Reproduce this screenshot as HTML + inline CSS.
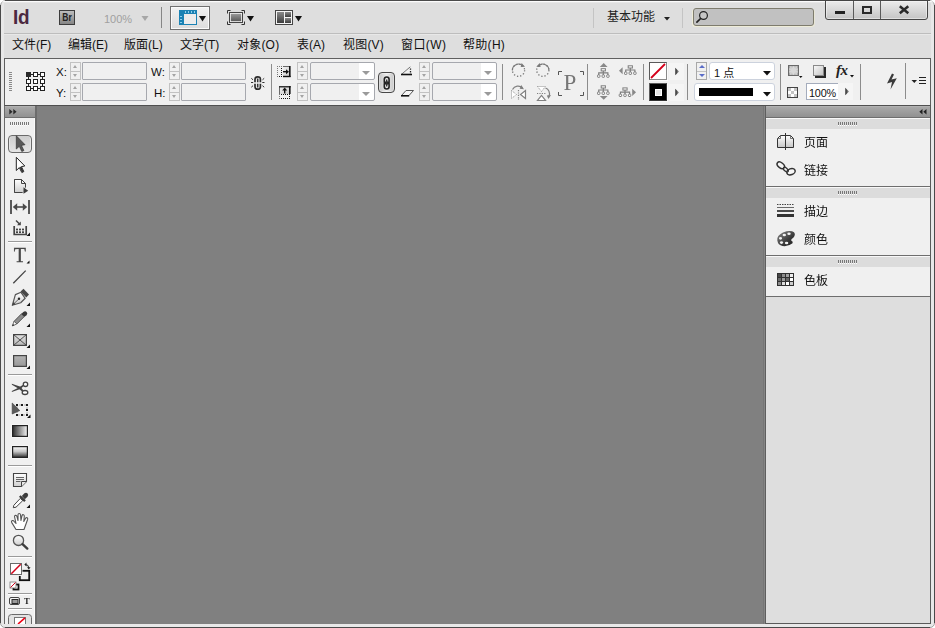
<!DOCTYPE html>
<html lang="zh-CN">
<head>
<meta charset="utf-8">
<title>Adobe InDesign</title>
<style>
html,body{margin:0;padding:0;background:#fff;overflow:hidden;}
body{width:935px;height:628px;position:relative;font-family:"Liberation Sans","Noto Sans CJK SC",sans-serif;font-size:12px;color:#1a1a1a;}
.a{position:absolute;box-sizing:border-box;}
svg{position:absolute;overflow:visible;}
#win{left:0;top:0;width:935px;height:628px;background:#e8e8e8;border:1px solid #a2a2a2;border-radius:6px 6px 5px 5px;overflow:hidden;}
.wb{background:#4a4a4a;}
#root{left:0;top:0;width:935px;height:628px;}
.vsep{width:1px;height:36px;top:64px;background:#8c8c8c;}
.tsep{width:1px;background:#c4c4c4;}
.menu span{position:absolute;top:37px;white-space:nowrap;font-size:12px;line-height:16px;color:#111;}
.fld{width:65px;height:18px;background:#f0f0f0;border:1px solid #a6a8ae;border-radius:1px;}
.cmb{width:65px;height:18px;background:#f0f0f0;border:1px solid #a6a8ae;border-radius:2px;}
.cmb:before{content:"";position:absolute;right:0;top:0;bottom:0;width:15px;background:#fff;border-radius:0 2px 2px 0;}
.cmb:after{content:"";position:absolute;right:4px;top:8px;width:0;height:0;border-left:4px solid transparent;border-right:4px solid transparent;border-top:4px solid #9a9a9a;}
.spin{width:11px;height:18px;border:1px solid #c2c2c2;background:#f0f0f0;}
.spin:before,.spin:after{content:"";position:absolute;left:2px;width:0;height:0;border-left:2.5px solid transparent;border-right:2.5px solid transparent;}
.spin:before{top:2px;border-bottom:3px solid #a4a4a4;}
.spin:after{bottom:2px;border-top:3px solid #a4a4a4;}
.spin i{position:absolute;left:0;right:0;top:8px;height:1px;background:#c2c2c2;}
.spin.blue{border-color:#a8a8a8;}
.spin.blue:before{border-bottom-color:#5a6cc8;left:1.500px;border-left-width:3px;border-right-width:3px;}
.spin.blue:after{border-top-color:#5a6cc8;left:1.500px;border-left-width:3px;border-right-width:3px;}
.lbl{font-size:11.5px;line-height:14px;color:#111;white-space:nowrap;}
.wht{background:#fff;border:1px solid #ccd2dd;border-radius:3px;}
.tri-d{width:0;height:0;border-left:4px solid transparent;border-right:4px solid transparent;border-top:4px solid #111;}
.tri-r{width:0;height:0;border-top:4px solid transparent;border-bottom:4px solid transparent;border-left:5px solid #333;}
.abtn{width:15px;height:17px;background:#f5f5f5;}
.ptxt{font-size:12px;line-height:14px;color:#111;white-space:nowrap;will-change:transform;}
.grpbar{left:766px;width:164px;height:11px;background:#dcdcdc;border-top:1px solid #f8f8f8;}
.grpbody{left:766px;width:164px;background:#f0f0f0;}
.grip{height:3px;width:20px;background:repeating-linear-gradient(90deg,#787878 0,#787878 1px,transparent 1px,transparent 2px);}
.grip:after{content:"";position:absolute;left:0;top:3px;width:20px;height:1px;background:repeating-linear-gradient(90deg,#fcfcfc 0,#fcfcfc 1px,transparent 1px,transparent 2px);}
.hline{height:1px;background:#6e6e6e;}
.tline{left:9px;width:22px;height:1px;background:#9a9a9a;box-shadow:0 1px 0 #fff;}
.corner{width:0;height:0;border-left:3px solid transparent;border-bottom:3px solid #111;}
</style>
</head>
<body>
<div id="win" class="a"></div>
<div class="a wb" style="left:5px;top:0;width:925px;height:1px;"></div>
<div class="a wb" style="left:5px;top:627px;width:925px;height:1px;"></div>
<div class="a wb" style="left:0;top:5px;width:1px;height:618px;"></div>
<div class="a wb" style="left:934px;top:5px;width:1px;height:618px;"></div>
<div id="root" class="a">
  <!-- application background -->
  <div class="a" style="left:4px;top:3px;width:927px;height:621px;background:#dedede;"></div>
  <div class="a" style="left:2px;top:1px;width:931px;height:2px;background:linear-gradient(#fbfbfb 50%,#e6e6e6 50%);border-radius:5px 5px 0 0;"></div>
  <!-- ===== APP BAR ===== -->
  <div id="appbar" class="a" style="left:0;top:0;width:935px;height:34px;">
    <div class="a" style="left:4px;top:33px;width:927px;height:1px;background:#bdbdbd;"></div>
    <div class="a" style="left:4px;top:34px;width:927px;height:1px;background:#e8e8e8;"></div>
    <div class="a" style="left:13px;top:5px;font-size:21px;line-height:24px;font-weight:bold;color:#4b2840;letter-spacing:-0.3px;transform:scaleX(.9);transform-origin:0 0;">Id</div>
    <div class="a" style="left:59px;top:10px;width:16px;height:15px;border:1px solid #3c3c3c;background:linear-gradient(#bdbdbd,#858585);"></div>
    <div class="a" style="left:59px;top:10px;width:16px;height:15px;font-size:10px;line-height:15px;font-weight:bold;color:#222;text-align:center;transform:scaleX(.85);">Br</div>
    <div class="a" style="left:104px;top:12px;font-size:11px;line-height:14px;color:#a0a0a0;">100%</div>
    <svg style="left:141px;top:16px" width="8" height="5"><polygon points="0.5,0 7.5,0 4,5" fill="#a6a6a6"/></svg>
    <div class="a" style="left:161px;top:7px;width:1px;height:21px;background:#868686;"></div>

    <!-- view options button -->
    <div class="a" style="left:170px;top:6px;width:40px;height:24px;border:1px solid #707070;background:linear-gradient(#f2f2f2,#dcdcdc);box-shadow:inset 0 0 0 1px #fafafa;"></div>
    <svg style="left:179px;top:10px" width="19" height="16" viewBox="0 0 19 16">
      <rect x="0" y="0" width="18" height="15" fill="#1b82b4"/>
      <rect x="5" y="4" width="12" height="10" fill="#ececec"/>
      <g fill="#8fd0ee"><rect x="6" y="1" width="1" height="2"/><rect x="9" y="1" width="1" height="2"/><rect x="12" y="1" width="1" height="2"/><rect x="15" y="1" width="1" height="2"/><rect x="1" y="6" width="2" height="1"/><rect x="1" y="9" width="2" height="1"/><rect x="1" y="12" width="2" height="1"/></g>
    </svg>
    <svg style="left:199px;top:16px" width="8" height="6"><polygon points="0,0 7,0 3.5,5.5" fill="#111"/></svg>

    <!-- screen mode -->
    <svg style="left:227px;top:10px" width="19" height="16" viewBox="0 0 19 16">
      <defs><linearGradient id="gsm" x1="0" y1="0" x2="0" y2="1"><stop offset="0" stop-color="#9a9a9a"/><stop offset="1" stop-color="#5a5a5a"/></linearGradient></defs>
      <path d="M0.5 3.5V0.5H3.5M14.5 0.5H17.5V3.5M17.5 11.500V14.5H14.5M3.5 14.5H0.5V11.5" fill="none" stroke="#333" stroke-width="1"/>
      <rect x="2.500" y="2.500" width="13" height="10" fill="#f4f4f4" stroke="#444"/>
      <rect x="3.800" y="3.800" width="10.400" height="7.400" fill="url(#gsm)"/>
    </svg>
    <svg style="left:247px;top:16px" width="8" height="6"><polygon points="0,0 7,0 3.5,5.5" fill="#111"/></svg>

    <!-- arrange documents -->
    <svg style="left:275px;top:10px" width="19" height="16" viewBox="0 0 19 16">
      <defs><linearGradient id="gad" x1="0" y1="0" x2="0" y2="1"><stop offset="0" stop-color="#8a8a8a"/><stop offset="1" stop-color="#3c3c3c"/></linearGradient></defs>
      <rect x="0.500" y="0.500" width="17" height="14" fill="#f4f4f4" stroke="#444"/>
      <rect x="2" y="2" width="7" height="11" fill="url(#gad)"/>
      <rect x="10" y="2" width="6" height="5" fill="url(#gad)"/>
      <rect x="10" y="8" width="6" height="5" fill="url(#gad)"/>
    </svg>
    <svg style="left:295px;top:16px" width="8" height="6"><polygon points="0,0 7,0 3.5,5.5" fill="#111"/></svg>

    <!-- workspace switcher -->
    <div class="a tsep" style="left:593px;top:8px;height:20px;"></div>
    <div class="a" style="left:607px;top:9px;font-size:12px;line-height:16px;color:#222;white-space:nowrap;">基本功能</div>
    <svg style="left:664px;top:17px" width="6" height="4"><polygon points="0,0 6,0 3,3.500" fill="#222"/></svg>
    <div class="a tsep" style="left:682px;top:8px;height:20px;"></div>

    <!-- search -->
    <div class="a" style="left:693px;top:8px;width:121px;height:18px;background:#c1c1c1;border:1px solid #7e7c6e;border-radius:3px;box-shadow:-1px 1px 0 #eeecd8,1px 1px 0 #e8e6d6;"></div>
    <svg style="left:696px;top:10px" width="14" height="14" viewBox="0 0 14 14">
      <circle cx="7.500" cy="5.500" r="3.900" fill="#c6c6c6" stroke="#222" stroke-width="1.200"/>
      <path d="M4.600 8.500L0.900 12.200" stroke="#222" stroke-width="1.700" stroke-linecap="round"/>
    </svg>

    <!-- window buttons -->
    <div class="a" style="left:825px;top:0px;width:103px;height:20px;border:1px solid #454545;border-radius:0 0 3px 3px;background:linear-gradient(#e8e8e8 10%,#c4c4c4 100%);box-shadow:inset 0 0 0 1px rgba(255,255,255,.45);"></div>
    <div class="a" style="left:853px;top:1px;width:1px;height:18px;background:#5a5a5a;"></div>
    <div class="a" style="left:880px;top:1px;width:1px;height:18px;background:#5a5a5a;"></div>
    <div class="a" style="left:835px;top:11px;width:10px;height:3px;background:#222;"></div>
    <div class="a" style="left:862px;top:6px;width:10px;height:8px;border:2px solid #2a2a2a;border-top-width:2px;"></div>
    <svg style="left:898px;top:5px" width="12" height="9" viewBox="0 0 12 9"><path d="M1.800 1.300L10.300 8.300M10.300 1.300L1.800 8.300" stroke="#2a2a2a" stroke-width="2.500"/></svg>
  </div>

  <!-- ===== MENU BAR ===== -->
  <div class="menu">
    <span style="left:12px;">文件(F)</span>
    <span style="left:68px;">编辑(E)</span>
    <span style="left:124px;">版面(L)</span>
    <span style="left:180px;">文字(T)</span>
    <span style="left:237px;letter-spacing:.2px;">对象(O)</span>
    <span style="left:297px;">表(A)</span>
    <span style="left:343px;letter-spacing:.2px;">视图(V)</span>
    <span style="left:401px;letter-spacing:.4px;">窗口(W)</span>
    <span style="left:463px;letter-spacing:.3px;">帮助(H)</span>
  </div>
  <!-- ===== CONTROL PANEL ===== -->
  <div id="ctrl" class="a" style="left:4px;top:58px;width:927px;height:48px;background:#f0f0f0;border:1px solid #5f5f5f;border-bottom-color:#505050;"></div>
  <!-- grip -->
  <div class="a" style="left:9px;top:72px;width:3px;height:20px;background:repeating-linear-gradient(180deg,#8a8a8a 0,#8a8a8a 1px,transparent 1px,transparent 2px);"></div>
  <!-- reference point -->
  <svg style="left:26px;top:72px" width="19" height="19" viewBox="0 0 19 19">
    <path d="M2.500 2.500H16.500V16.500H2.500Z" fill="none" stroke="#222" stroke-width="1"/>
    <g fill="#fff" stroke="#222" stroke-width="1">
      <rect x="7.500" y="0.500" width="4" height="4"/><rect x="14.500" y="0.500" width="4" height="4"/>
      <rect x="0.500" y="7.500" width="4" height="4"/><rect x="7.500" y="7.500" width="4" height="4"/><rect x="14.500" y="7.500" width="4" height="4"/>
      <rect x="0.500" y="14.500" width="4" height="4"/><rect x="7.500" y="14.500" width="4" height="4"/><rect x="14.500" y="14.500" width="4" height="4"/>
    </g>
    <rect x="0" y="0" width="5" height="5" fill="#2a2a2a"/>
  </svg>
  <!-- X Y -->
  <div class="a lbl" style="left:56px;top:65px;">X:</div>
  <div class="a lbl" style="left:56px;top:86px;">Y:</div>
  <div class="a spin" style="left:70px;top:62px;"><i></i></div>
  <div class="a spin" style="left:70px;top:83px;"><i></i></div>
  <div class="a fld" style="left:82px;top:62px;"></div>
  <div class="a fld" style="left:82px;top:83px;"></div>
  <!-- W H -->
  <div class="a lbl" style="left:151px;top:65px;">W:</div>
  <div class="a lbl" style="left:154px;top:86px;">H:</div>
  <div class="a spin" style="left:169px;top:62px;"><i></i></div>
  <div class="a spin" style="left:169px;top:83px;"><i></i></div>
  <div class="a fld" style="left:181px;top:62px;"></div>
  <div class="a fld" style="left:181px;top:83px;"></div>
  <!-- broken chain -->
  <svg style="left:250px;top:75px" width="16" height="16" viewBox="250 75 16 16">
    <g fill="none" stroke="#2c2c2c" stroke-width="1.700">
      <path d="M255 82.300V79.300Q255 76.800 257.700 76.800T260.400 79.300V82.300"/>
      <path d="M255 83.700V86.700Q255 89.200 257.700 89.200T260.400 86.700V83.700"/>
    </g>
    <path d="M257.700 78.500V82.300M257.700 83.700V87.500" stroke="#333" stroke-width="1.500"/>
    <path d="M251 82.500H253.200M262.300 82.500H264.500M251.300 78.300L253 79.800M264.200 78.300L262.500 79.800M251.300 87.200L253 85.700M264.200 87.200L262.500 85.700" stroke="#333" stroke-width="1"/>
  </svg>
  <div class="a vsep" style="left:271px;"></div>
  <!-- scale X% icon -->
  <svg style="left:276px;top:64px" width="16" height="38" viewBox="276 64 16 38">
    <defs><linearGradient id="gsc" x1="0" y1="0" x2="1" y2="1"><stop offset="0" stop-color="#f2f2f2"/><stop offset="1" stop-color="#c8c8c8"/></linearGradient></defs>
    <rect x="283" y="66" width="7" height="10.500" fill="url(#gsc)"/>
    <rect x="283" y="66" width="7" height="1" fill="#6a6a6a"/>
    <rect x="289" y="66" width="1.600" height="11" fill="#111"/>
    <rect x="283" y="75.800" width="7.600" height="1.400" fill="#111"/>
    <rect x="283" y="71" width="4" height="1.400" fill="#111"/><path d="M286 69.200L289 71.700L286 74.200Z" fill="#111"/>
    <g fill="#7a7a7a"><rect x="277" y="66" width="1" height="1"/><rect x="279" y="66" width="1" height="1"/><rect x="281" y="66" width="1" height="1"/><rect x="277" y="68" width="1" height="1"/><rect x="277" y="70" width="1" height="1"/><rect x="277" y="72" width="1" height="1"/><rect x="277" y="74" width="1" height="1"/><rect x="277" y="76" width="1" height="1"/></g>
    <g fill="#111"><rect x="281" y="68" width="1" height="1"/><rect x="281" y="70" width="1" height="1"/><rect x="281" y="72" width="1" height="1"/><rect x="281" y="74" width="1" height="1"/><rect x="279" y="76" width="1" height="1"/><rect x="281" y="76" width="1" height="1"/></g>
    <!-- scale Y% icon -->
    <rect x="279" y="86" width="11" height="8" fill="url(#gsc)"/>
    <rect x="279" y="86" width="1" height="8" fill="#6a6a6a"/>
    <rect x="279" y="86" width="11.600" height="1.500" fill="#333"/>
    <rect x="289" y="86" width="1.600" height="8" fill="#111"/>
    <rect x="284" y="89" width="1.400" height="4.500" fill="#111"/><path d="M282.200 90.500L284.700 87.600L287.200 90.500Z" fill="#111"/>
    <g fill="#7a7a7a"><rect x="279" y="94" width="1" height="1"/><rect x="279" y="96" width="1" height="1"/><rect x="279" y="98" width="1" height="1"/></g>
    <g fill="#111"><rect x="281" y="94" width="1" height="1"/><rect x="283" y="94" width="1" height="1"/><rect x="285" y="94" width="1" height="1"/><rect x="287" y="94" width="1" height="1"/><rect x="289" y="94" width="1" height="1"/><rect x="289" y="96" width="1" height="1"/><rect x="281" y="98" width="1" height="1"/><rect x="283" y="98" width="1" height="1"/><rect x="285" y="98" width="1" height="1"/><rect x="287" y="98" width="1" height="1"/><rect x="289" y="98" width="1" height="1"/></g>
  </svg>
  <div class="a spin" style="left:297px;top:62px;"><i></i></div>
  <div class="a spin" style="left:297px;top:83px;"><i></i></div>
  <div class="a cmb" style="left:310px;top:62px;"></div>
  <div class="a cmb" style="left:310px;top:83px;"></div>
  <!-- constrain link button -->
  <div class="a" style="left:378px;top:72px;width:17px;height:21px;border:1px solid #484848;border-radius:4px;background:linear-gradient(90deg,#c4c4c4,#ececec 50%,#c8c8c8);box-shadow:inset 0 0 0 1px rgba(255,255,255,.35);"></div>
  <svg style="left:382px;top:75px" width="9" height="16" viewBox="382 75 9 16">
    <rect x="384.300" y="77" width="4.800" height="7" rx="2.400" fill="#e8e8e8" stroke="#222" stroke-width="1.600"/>
    <rect x="384.300" y="82" width="4.800" height="7" rx="2.400" fill="none" stroke="#222" stroke-width="1.600"/>
    <path d="M386.700 79.500V86.500" stroke="#333" stroke-width="1.400"/>
  </svg>
  <!-- rotation / shear icons -->
  <svg style="left:400px;top:66px" width="14" height="11" viewBox="0 0 14 11">
    <path d="M1.500 8.300L10.300 0.800" stroke="#777" stroke-width="1"/>
    <path d="M10.500 2.500V8" stroke="#222" stroke-width="1.300" stroke-dasharray="1.300 1.300"/>
    <path d="M1 8.500H12" stroke="#111" stroke-width="1.600"/>
  </svg>
  <svg style="left:400px;top:89px" width="15" height="9" viewBox="0 0 15 9">
    <path d="M1.500 6.500L6 1.500H13.500L9 6.500Z" fill="#f6f6f6" stroke="#555" stroke-width="1"/>
    <path d="M1 6.800H9.200" stroke="#111" stroke-width="1.600"/>
  </svg>
  <div class="a spin" style="left:419px;top:62px;"><i></i></div>
  <div class="a spin" style="left:419px;top:83px;"><i></i></div>
  <div class="a cmb" style="left:432px;top:62px;"></div>
  <div class="a cmb" style="left:432px;top:83px;"></div>
  <div class="a vsep" style="left:502px;"></div>
  <!-- rotate cw / ccw -->
  <svg style="left:508px;top:60px" width="48" height="20" viewBox="508 60 48 20">
    <circle cx="518.500" cy="70.200" r="6.100" fill="none" stroke="#787878" stroke-width="1.300" stroke-dasharray="1.300 1.900"/>
    <path d="M512.400 70.500A6.100 6.100 0 0 1 522.600 65.700" fill="none" stroke="#787878" stroke-width="1.100"/>
    <path d="M521.600 63L525 66.800L520.700 67Z" fill="#787878"/>
    <circle cx="542.800" cy="70.200" r="6.100" fill="none" stroke="#787878" stroke-width="1.300" stroke-dasharray="1.300 1.900"/>
    <path d="M548.900 70.500A6.100 6.100 0 0 0 538.700 65.700" fill="none" stroke="#787878" stroke-width="1.100"/>
    <path d="M539.700 63L536.300 66.800L540.600 67Z" fill="#787878"/>
  </svg>
  <!-- flip h / v -->
  <svg style="left:510px;top:84px" width="18" height="18" viewBox="0 0 18 18">
    <path d="M2.500 5.500A6.200 6.200 0 0 1 12.500 4" fill="none" stroke="#808080" stroke-width="1.200"/>
    <path d="M11.300 1L14 5.200L9.600 4.800Z" fill="#808080"/>
    <path d="M1.500 6.500V14.500L6.500 10.500Z" fill="#fff" stroke="#909090" stroke-width="1" stroke-dasharray="1 1"/>
    <path d="M8.500 6V16" stroke="#808080" stroke-width="1.200" stroke-dasharray="1.200 1.200"/>
    <path d="M15.500 6.500V14.500L10.500 10.500Z" fill="#fff" stroke="#808080" stroke-width="1.200"/>
  </svg>
  <svg style="left:534px;top:85px" width="18" height="18" viewBox="0 0 18 18">
    <path d="M3.500 1.500H11.500L7.500 6.500Z" fill="#fff" stroke="#909090" stroke-width="1" stroke-dasharray="1 1"/>
    <path d="M3 8.500H12" stroke="#808080" stroke-width="1.200" stroke-dasharray="1.200 1.200"/>
    <path d="M3.500 15.500H11.500L7.500 10.500Z" fill="#fff" stroke="#808080" stroke-width="1.200"/>
    <path d="M11.500 3A6 6 0 0 1 15 11" fill="none" stroke="#808080" stroke-width="1.200"/>
    <path d="M12.800 10.500L17 10L14.500 14Z" fill="#808080"/>
  </svg>
  <!-- P preview -->
  <svg style="left:558px;top:71px;will-change:transform" width="26" height="25" viewBox="0 0 26 25">
    <path d="M0.500 4V0.500H4M22 0.500H25.500V4M25.500 21V24.500H22M4 24.500H0.500V21" fill="none" stroke="#555" stroke-width="1"/>
    <text x="5.500" y="19" font-family="Liberation Serif, serif" font-size="23" fill="#777">P</text>
  </svg>
  <div class="a vsep" style="left:587px;"></div>
  <svg style="left:0;top:0" width="0" height="0"><defs><linearGradient id="garr" x1="0" y1="0" x2="1" y2="0"><stop offset="0" stop-color="#222"/><stop offset="1" stop-color="#a0a0a0"/></linearGradient></defs></svg>
  <!-- select container / content icons -->
  <svg style="left:590px;top:58px" width="50" height="48" viewBox="590 58 50 48">
    <path d="M599.8 66.9H607.6L603.7 63Z" fill="#888"/><g fill="none" stroke="#7c7c7c" stroke-width="1.1"><path d="M603.3 70.8V72.9M598.7 75.2V72.9H607.9V75.2M603.3 72.9V75.2"/></g><g fill="#fff" stroke="#7c7c7c" stroke-width="1"><rect x="601.2" y="68.7" width="4.2" height="2.2"/><rect x="597.5" y="74.9" width="2.4" height="2.4" rx="0.6"/><rect x="602.1" y="74.9" width="2.4" height="2.4" rx="0.6"/><rect x="606.7" y="74.9" width="2.4" height="2.4" rx="0.6"/></g>
    <path d="M622.6 67.2V74.2L619 70.700Z" fill="#888"/><g fill="none" stroke="#7c7c7c" stroke-width="1.1"><path d="M630.3 67.9V70M625.7 72.3V70H634.9V72.3M630.3 70V72.3"/></g><g fill="#fff" stroke="#7c7c7c" stroke-width="1"><rect x="628.2" y="65.8" width="4.2" height="2.2"/><rect x="624.5" y="72" width="2.4" height="2.4" rx="0.6"/><rect x="629.1" y="72" width="2.4" height="2.4" rx="0.6"/><rect x="633.7" y="72" width="2.4" height="2.4" rx="0.6"/></g>
    <path d="M599.8 95.900H607.6L603.7 99.800Z" fill="#888"/><g fill="none" stroke="#7c7c7c" stroke-width="1.1"><path d="M603.3 87.9V90M598.7 92.3V90H607.9V92.3M603.3 90V92.3"/></g><g fill="#fff" stroke="#7c7c7c" stroke-width="1"><rect x="601.2" y="85.8" width="4.2" height="2.2"/><rect x="597.5" y="92" width="2.4" height="2.4" rx="0.6"/><rect x="602.1" y="92" width="2.4" height="2.4" rx="0.6"/><rect x="606.7" y="92" width="2.4" height="2.4" rx="0.6"/></g>
    <path d="M632.2 88.700V95.900L636 92.300Z" fill="#888"/><g fill="none" stroke="#7c7c7c" stroke-width="1.1"><path d="M625 90V92.1M620.4 94.4V92.1H629.6V94.4M625 92.1V94.4"/></g><g fill="#fff" stroke="#7c7c7c" stroke-width="1"><rect x="622.9" y="87.9" width="4.2" height="2.2"/><rect x="619.2" y="94.1" width="2.4" height="2.4" rx="0.6"/><rect x="623.8" y="94.1" width="2.4" height="2.4" rx="0.6"/><rect x="628.4" y="94.1" width="2.4" height="2.4" rx="0.6"/></g>
  </svg>
  <div class="a vsep" style="left:643px;"></div>
  <!-- fill swatch -->
  <div class="a" style="left:649px;top:62px;width:18px;height:18px;background:#fff;border:1px solid #5a5a5a;border-right-color:#8a8a8a;border-bottom-color:#8a8a8a;box-shadow:1px 1px 0 #fafafa;"></div>
  <svg style="left:650px;top:63px" width="16" height="16" viewBox="0 0 16 16"><path d="M1 15L15 1" stroke="#d4001a" stroke-width="1.800"/></svg>
  <div class="a abtn" style="left:669px;top:63px;"></div>
  <svg style="left:675px;top:67px" width="5" height="9"><polygon points="0.300,0.800 4,4.500 0.300,8.200" fill="url(#garr)"/></svg>
  <!-- stroke swatch -->
  <div class="a" style="left:649px;top:83px;width:18px;height:18px;background:#000;border:1px solid #5a5a5a;border-right-color:#333;border-bottom-color:#333;box-shadow:1px 1px 0 #fafafa;"></div>
  <div class="a" style="left:655px;top:89px;width:7px;height:7px;background:#e6e6e6;border:1px solid #fff;"></div>
  <div class="a abtn" style="left:669px;top:84px;"></div>
  <svg style="left:675px;top:88px" width="5" height="9"><polygon points="0.300,0.800 4,4.500 0.300,8.200" fill="url(#garr)"/></svg>
  <div class="a vsep" style="left:687px;"></div>
  <!-- stroke weight -->
  <div class="a spin blue" style="left:696px;top:62px;"><i></i></div>
  <div class="a wht" style="left:709px;top:62px;width:66px;height:18px;"></div>
  <div class="a lbl" style="left:714px;top:66px;font-size:11px;">1 点</div>
  <svg style="left:763px;top:71px" width="8" height="5"><polygon points="0,0 8,0 4,4.500" fill="#111"/></svg>
  <!-- stroke type -->
  <div class="a wht" style="left:694px;top:83px;width:81px;height:18px;"></div>
  <div class="a" style="left:699px;top:88px;width:54px;height:8px;background:#000;"></div>
  <svg style="left:763px;top:92px" width="8" height="5"><polygon points="0,0 8,0 4,4.500" fill="#111"/></svg>
  <div class="a vsep" style="left:780px;"></div>
  <!-- effects icons -->
  <svg style="left:787px;top:64px" width="17" height="15" viewBox="0 0 17 15">
    <defs><radialGradient id="gfe"><stop offset="0.500" stop-color="#d8d8d8"/><stop offset="1" stop-color="#a8a8a8"/></radialGradient></defs>
    <rect x="1.500" y="1.500" width="10" height="10" fill="url(#gfe)" stroke="#6a6a6a" stroke-width="1"/>
    <rect x="3" y="3" width="7" height="7" fill="none" stroke="#e8e8e8" stroke-width="1" stroke-dasharray="1.500 1.300"/>
    <path d="M12 12H15.500L13.700 14Z" fill="#111"/>
  </svg>
  <svg style="left:812px;top:64px" width="16" height="15" viewBox="0 0 16 15">
    <defs><linearGradient id="gds" x1="0" y1="0" x2="1" y2="1"><stop offset="0" stop-color="#fafafa"/><stop offset="1" stop-color="#c4c4c4"/></linearGradient></defs>
    <rect x="3" y="3" width="11" height="11" fill="#2a2a2a"/>
    <rect x="1.500" y="1.500" width="10" height="10" fill="url(#gds)" stroke="#8a8a8a" stroke-width="1"/>
  </svg>
  <div class="a" style="left:836px;top:61px;font-family:'Liberation Serif',serif;font-style:italic;font-weight:bold;font-size:15px;line-height:18px;color:#222;letter-spacing:-0.5px;">fx</div>
  <svg style="left:850px;top:75px" width="4" height="3"><polygon points="0,0 4,0 2,2.500" fill="#111"/></svg>
  <!-- opacity -->
  <svg style="left:787px;top:87px" width="12" height="12" viewBox="0 0 12 12">
    <rect x="0.500" y="0.500" width="10" height="10" fill="#fff" stroke="#444" stroke-width="1"/>
    <g fill="#c4c4c4"><rect x="1" y="1" width="3" height="3"/><rect x="7" y="1" width="3" height="3"/><rect x="4" y="4" width="3" height="3"/><rect x="1" y="7" width="3" height="3"/><rect x="7" y="7" width="3" height="3"/></g>
  </svg>
  <div class="a" style="left:806px;top:83px;width:33px;height:17px;background:#fff;border:1px solid #a4acbc;border-right:none;"></div>
  <div class="a lbl" style="left:809px;top:86px;font-size:11.5px;letter-spacing:-0.200px;transform:scaleX(.94);transform-origin:0 0;">100%</div>
  <div class="a abtn" style="left:838px;top:83px;"></div>
  <svg style="left:845px;top:87px" width="5" height="9"><polygon points="0.300,0.800 4,4.500 0.300,8.200" fill="url(#garr)"/></svg>
  <div class="a vsep" style="left:860px;"></div>
  <!-- quick apply -->
  <svg style="left:886px;top:73px" width="12" height="17" viewBox="0 0 12 17"><path d="M6 0.500L8 1.500L5.500 6.500L10.800 5.200L4.500 16.500L6 9L1 10.500Z" fill="#3a3a3a"/></svg>
  <div class="a vsep" style="left:905px;top:63px;"></div>
  <!-- panel menu -->
  <svg style="left:911px;top:76px" width="16" height="9" viewBox="0 0 16 9">
    <path d="M0.500 4H6L3.300 7Z" fill="#222"/>
    <path d="M8 1.500H15M8 4.500H15M8 7.500H15" stroke="#222" stroke-width="1"/>
  </svg>
  <!-- ===== CANVAS ===== -->
  <div class="a" style="left:35px;top:106px;width:731px;height:518px;background:#808080;border-left:2px solid #6c6c6c;"></div>
  <div class="a" style="left:763px;top:106px;width:1px;height:518px;background:#767676;"></div>
  <div class="a" style="left:764px;top:106px;width:1px;height:518px;background:#868686;"></div>
  <div class="a" style="left:765px;top:106px;width:1px;height:518px;background:#5e5e5e;"></div>
  <!-- ===== TOOLBOX ===== -->
  <div id="tools" class="a" style="left:4px;top:106px;width:31px;height:518px;background:#f0f0f0;border-left:1px solid #6a6a6a;border-right:1px solid #fafafa;"></div>
  <div class="a" style="left:5px;top:106px;width:30px;height:11px;background:linear-gradient(#a8a8a8,#919191);border-top:1px solid #b2b2b2;"></div>
  <div class="a" style="left:5px;top:117px;width:30px;height:1px;background:#6e6e6e;"></div>
  <svg style="left:9px;top:109px" width="8" height="6"><path d="M0.300 0V5.500L3.600 2.750ZM4.300 0V5.500L7.600 2.750Z" fill="#2a2a2a"/></svg>
  <div class="a grip" style="left:10px;top:122px;"></div>
  <!-- selected tool button -->
  <div class="a" style="left:8px;top:135px;width:24px;height:18px;border:1px solid #6a6a6a;border-radius:4px;background:linear-gradient(#cdcdcd,#e4e4e4);box-shadow:inset 1px 0 0 #e6e6e6,inset -1px 0 0 #e6e6e6;"></div>
  <div class="a tline" style="left:8px;top:241px;width:24px;"></div>
  <div class="a tline" style="left:8px;top:374px;width:24px;"></div>
  <div class="a tline" style="left:8px;top:465px;width:24px;"></div>
  <div class="a tline" style="left:8px;top:556px;width:24px;"></div>
  <div class="a tline" style="left:8px;top:593px;width:24px;"></div>
  <div class="a tline" style="left:8px;top:608px;width:24px;"></div>
  <svg style="left:0;top:0;overflow:hidden;will-change:transform" width="40" height="624" viewBox="0 0 40 624">
    <defs>
      <linearGradient id="tg1" x1="0" y1="0" x2="0" y2="1"><stop offset="0" stop-color="#e2e2e2"/><stop offset="1" stop-color="#b8b8b8"/></linearGradient>
      <linearGradient id="tg2" x1="0" y1="0" x2="0" y2="1"><stop offset="0" stop-color="#b4b4b4"/><stop offset="1" stop-color="#989898"/></linearGradient>
      <linearGradient id="tg3" x1="0" y1="0" x2="1" y2="0"><stop offset="0" stop-color="#2e2e2e"/><stop offset="1" stop-color="#f6f6f6"/></linearGradient>
      <linearGradient id="tg4" x1="0" y1="0" x2="0" y2="1"><stop offset="0" stop-color="#fafafa"/><stop offset="0.450" stop-color="#c8c8c8"/><stop offset="1" stop-color="#303030"/></linearGradient>
      <linearGradient id="tg5" x1="0" y1="0" x2="0" y2="1"><stop offset="0" stop-color="#fff"/><stop offset="1" stop-color="#cfcfcf"/></linearGradient>
    </defs>
    <!-- selection tool -->
    <path d="M16.300 135.800V149L19.300 146.300L21.800 151.500L23.900 150.500L21.400 145.400L25 144.700Z" fill="#585858" stroke="#333" stroke-width="0.700" stroke-linejoin="round"/>
    <!-- direct selection -->
    <path d="M16.300 157.300V170.500L19.300 167.600L21.800 172.500L23.800 171.600L21.400 166.600L24.800 166Z" fill="#fff" stroke="#222" stroke-width="1" stroke-linejoin="round"/>
    <path d="M19.600 167.500L22 172.300L23.600 171.500L21.200 166.600Z" fill="#333"/>
    <!-- page tool -->
    <path d="M14.500 179.500H21.500L25.500 183.500V187.500M14.500 179.500V192.500H22.500" fill="#f8f8f8" stroke="#444" stroke-width="1"/>
    <path d="M14.500 179.500H21.500L25.500 183.500V192.500H14.500Z" fill="url(#tg5)" stroke="none"/>
    <path d="M14.500 192.500V179.500H21.500L25.500 183.500V187.500M14.500 192.500H22.500M21.500 179.500V183.500H25.500" fill="none" stroke="#444" stroke-width="1"/>
    <path d="M23.500 187.300L28.200 190.700L23.500 193.800Z" fill="#3c3c3c"/>
    <!-- gap tool -->
    <path d="M11 200V214M29 200V214" stroke="#4a4a4a" stroke-width="1.800"/>
    <path d="M15 207H25" stroke="#4a4a4a" stroke-width="1.600"/>
    <path d="M12.800 207L17.200 203.200V210.800ZM27.200 207L22.800 203.200V210.800Z" fill="#4a4a4a"/>
    <!-- content collector -->
    <path d="M14.200 226V234.500H26.200V226" fill="none" stroke="#444" stroke-width="1.700"/>
    <path d="M16 220.500L19.500 224" stroke="#444" stroke-width="1.400"/>
    <path d="M20.800 221.500V225.300H17Z" fill="#444"/>
    <g fill="#444"><rect x="16" y="228.600" width="2" height="1.800"/><rect x="19" y="228.600" width="2" height="1.800"/><rect x="22" y="228.600" width="2" height="1.800"/><rect x="16" y="231.300" width="2" height="1.800"/><rect x="19" y="231.300" width="2" height="1.800"/><rect x="22" y="231.300" width="2" height="1.800"/></g>
    <path d="M30 232.500V236H26.500Z" fill="#111"/>
    <!-- type tool -->
    <text x="13.800" y="262.200" font-family="Liberation Serif, serif" font-size="20" fill="#484848" stroke="#484848" stroke-width="0.300">T</text>
    <path d="M29.500 260.500V263.500H26.500Z" fill="#111"/>
    <!-- line tool -->
    <path d="M13.300 283.200L25.700 270.600" stroke="#444" stroke-width="1.300"/>
    <!-- pen tool -->
    <path d="M12.300 305.300L15.400 294.600L21 292.300L25.200 298.300L20.700 302.700Z" fill="url(#tg5)" stroke="#555" stroke-width="1.200" stroke-linejoin="round"/>
    <path d="M12.500 305L18.800 299" stroke="#555" stroke-width="0.900"/>
    <path d="M12.300 305.300L13.300 302L15.600 304.300Z" fill="#444"/>
    <circle cx="19" cy="298.800" r="1.200" fill="#2a2a2a"/>
    <path d="M20.600 291.400L23.500 288.700L29 294.500L26.300 297.400Z" fill="#484848"/>
    <path d="M30 302.500V306H26.500Z" fill="#111"/>
    <!-- pencil tool -->
    <path d="M14.100 321.300L21.500 313.800L24.300 316.500L16.800 324Z" fill="#8e8e8e" stroke="#4a4a4a" stroke-width="0.900" stroke-linejoin="round"/>
    <path d="M12.300 325.900L14.100 321.300L16.800 324Z" fill="#fff" stroke="#4a4a4a" stroke-width="0.800" stroke-linejoin="round"/>
    <path d="M12.200 326L13 323.900L14.300 325.200Z" fill="#222"/>
    <path d="M21.300 314L23.300 312Q25.200 310.600 26.600 311.900Q28 313.400 26.600 315.200L24.500 316.800Z" fill="#383838"/>
    <path d="M30 323.500V327H26.500Z" fill="#111"/>
    <!-- rectangle frame tool -->
    <rect x="13.600" y="334.600" width="12.800" height="10.800" fill="url(#tg1)" stroke="#444" stroke-width="1.200"/>
    <path d="M13.600 334.600L26.400 345.400M26.400 334.600L13.600 345.400" stroke="#444" stroke-width="0.900"/>
    <path d="M30 344.500V348H26.500Z" fill="#111"/>
    <!-- rectangle tool -->
    <rect x="13.600" y="355.600" width="12.800" height="10.800" fill="url(#tg2)" stroke="#444" stroke-width="1.200"/>
    <path d="M30 365.500V369H26.500Z" fill="#111"/>
    <!-- scissors -->
    <path d="M11.800 383.700L20.600 386.800L23.400 390.600L22.300 391.800L19.200 389L11.900 384.700Z" fill="#444"/>
    <path d="M11.800 391.900L20.400 389L24 385.800L23 384.700L19.300 387.200L11.900 391Z" fill="#444"/>
    <circle cx="25.500" cy="384.300" r="2.200" fill="#fff" stroke="#444" stroke-width="1.300"/>
    <ellipse cx="25" cy="392.500" rx="2.800" ry="2" fill="#fff" stroke="#444" stroke-width="1.300"/>
    <!-- free transform -->
    <rect x="17" y="405" width="10" height="10" fill="none" stroke="#666" stroke-width="1" stroke-dasharray="1 1.500"/>
    <g fill="#1c1c1c"><rect x="16" y="404" width="2" height="2"/><rect x="21" y="404" width="2" height="2"/><rect x="26" y="404" width="2" height="2"/><rect x="26" y="409" width="2" height="2"/><rect x="16" y="414" width="2" height="2"/><rect x="21" y="414" width="2" height="2"/><rect x="26" y="414" width="2" height="2"/></g>
    <path d="M12.200 403V414L19.800 410.600Z" fill="#5a5a5a" stroke="#3a3a3a" stroke-width="0.600"/>
    <path d="M30.500 414.500V418H27Z" fill="#111"/>
    <!-- gradient swatch -->
    <rect x="11.500" y="424.500" width="17" height="13" fill="#fcfcfc"/>
    <rect x="12.600" y="425.600" width="14.800" height="10.800" fill="url(#tg3)" stroke="#222" stroke-width="1.200"/>
    <!-- gradient feather -->
    <rect x="11.500" y="445.500" width="17" height="13" fill="#fcfcfc"/>
    <rect x="12.600" y="446.600" width="14.800" height="10.800" fill="url(#tg4)" stroke="#222" stroke-width="1.200"/>
    <!-- note tool -->
    <path d="M13.500 473.500H26.500V481.500L21.500 486.500H13.500Z" fill="url(#tg5)" stroke="#444" stroke-width="1.100"/>
    <path d="M26.500 481.500H21.500V486.500" fill="#e8e8e8" stroke="#444" stroke-width="1"/>
    <path d="M16 477.500H24M16 479.500H24M16 481.500H20.500" stroke="#555" stroke-width="0.900"/>
    <!-- eyedropper -->
    <path d="M13.300 507.700L13.800 505.300L20.300 498.400L22.700 500.700L16 507.200Z" fill="#fff" stroke="#444" stroke-width="1" stroke-linejoin="round"/>
    <path d="M19 496.800L20.600 495.200L25.800 500.300L24.200 502Z" fill="#3c3c3c"/>
    <path d="M21.800 496L24.400 493.300Q26.300 492.200 27.600 493.600Q28.800 495.200 27.500 496.800L24.800 499.200Z" fill="#3c3c3c"/>
    <path d="M30 504.500V508H26.500Z" fill="#111"/>
    <!-- hand -->
    <path d="M16 529.500L11.800 522.600Q11 521 12.300 520.600Q13.500 520.400 14.300 521.600L16 523.500L14.600 517Q14.400 515.400 15.600 515.300Q16.700 515.300 17 516.700L18 520.500L18 514.800Q18.100 513.500 19.200 513.500Q20.400 513.500 20.500 514.800L21 520.400L22 515.600Q22.300 514.500 23.400 514.700Q24.400 515 24.300 516.200L23.800 521.500L25.600 518.300Q26.200 517.300 27.200 517.800Q28 518.300 27.600 519.500L24 529.500Z" fill="#fff" stroke="#555" stroke-width="1.100" stroke-linejoin="round"/>
    <!-- zoom -->
    <circle cx="18.500" cy="540.400" r="5.100" fill="url(#tg5)" stroke="#555" stroke-width="1.300"/>
    <path d="M22.500 544.200L27.300 548.600" stroke="#3c3c3c" stroke-width="2.400" stroke-linecap="round"/>
    <!-- fill / stroke -->
    <rect x="19.800" y="570.800" width="9.400" height="9.400" fill="#ececec" stroke="#111" stroke-width="1.800"/>
    <rect x="18" y="569.500" width="4.500" height="6.500" fill="#f0f0f0"/>
    <rect x="10.500" y="563.500" width="11" height="11" fill="#fff" stroke="#6a6a6a" stroke-width="1"/>
    <path d="M11.300 573.700L20.700 564.300" stroke="#d4001a" stroke-width="1.500"/>
    <path d="M25.200 564.500Q28.800 564.500 28.800 568" fill="none" stroke="#222" stroke-width="1"/>
    <path d="M26.500 562.500L24.300 564.500L26.500 566.500ZM27 567.200L28.800 569.600L30.600 567.200Z" fill="#222"/>
    <rect x="13.500" y="584.500" width="5" height="5" fill="#fff" stroke="#111" stroke-width="1.800"/>
    <rect x="10" y="582" width="6" height="6" fill="#fff" stroke="#777" stroke-width="0.800"/>
    <path d="M10.500 587.500L15.500 582.500" stroke="#d4001a" stroke-width="1"/>
    <!-- apply container / text -->
    <rect x="9.500" y="597.500" width="10" height="7" rx="1.500" fill="#f4f4f4" stroke="#444" stroke-width="1"/>
    <rect x="12" y="599.500" width="6" height="4" fill="#9a9a9a" stroke="#2a2a2a" stroke-width="1"/>
    <text x="24" y="603.700" font-family="Liberation Serif, serif" font-size="8.500" font-weight="bold" fill="#222">T</text>
    <!-- view mode button -->
    <path d="M8.500 624V617.500Q8.500 614.500 11.500 614.500H28.500Q31.500 614.500 31.500 617.500V624" fill="#e2e2e2" stroke="#6a6a6a" stroke-width="1"/>
    <rect x="14.500" y="617.500" width="11" height="8" fill="#fff" stroke="#777" stroke-width="1"/>
    <path d="M18 624L25 617.800" stroke="#f00014" stroke-width="1.600"/>
  </svg>
  <!-- ===== RIGHT DOCK ===== -->
  <div id="dock" class="a" style="left:766px;top:106px;width:165px;height:518px;background:#dedede;border-right:1px solid #5a5a5a;border-bottom:1px solid #5a5a5a;"></div>
  <div class="a" style="left:766px;top:106px;width:164px;height:11px;background:linear-gradient(#a8a8a8,#919191);border-top:1px solid #b2b2b2;"></div>
  <div class="a hline" style="left:766px;top:117px;width:164px;"></div>
  <svg style="left:919px;top:109px" width="8" height="6"><path d="M3.500 0V5.500L0.300 2.750ZM7.500 0V5.500L4.300 2.750Z" fill="#222"/></svg>
  <!-- group 1 -->
  <div class="a grpbar" style="top:118px;"></div>
  <div class="a grip" style="left:838px;top:122px;"></div>
  <div class="a grpbody" style="top:129px;height:57px;"></div>
  <div class="a hline" style="left:766px;top:186px;width:164px;"></div>
  <div class="a ptxt" style="left:804px;top:136px;">页面</div>
  <div class="a ptxt" style="left:804px;top:164px;">链接</div>
  <!-- group 2 -->
  <div class="a grpbar" style="top:187px;"></div>
  <div class="a grip" style="left:838px;top:191px;"></div>
  <div class="a grpbody" style="top:198px;height:57px;"></div>
  <div class="a hline" style="left:766px;top:255px;width:164px;"></div>
  <div class="a ptxt" style="left:804px;top:205px;">描边</div>
  <div class="a ptxt" style="left:804px;top:233px;">颜色</div>
  <!-- group 3 -->
  <div class="a grpbar" style="top:256px;"></div>
  <div class="a grip" style="left:838px;top:260px;"></div>
  <div class="a grpbody" style="top:267px;height:29px;"></div>
  <div class="a hline" style="left:766px;top:296px;width:164px;"></div>
  <div class="a ptxt" style="left:804px;top:274px;">色板</div>
  <!-- dock icons -->
  <svg style="left:770px;top:128px" width="30" height="170" viewBox="770 128 30 170">
    <defs>
      <linearGradient id="dg1" x1="0" y1="0" x2="0" y2="1"><stop offset="0" stop-color="#fff"/><stop offset="1" stop-color="#c6c6c6"/></linearGradient>
      <linearGradient id="dg2" x1="0" y1="0" x2="1" y2="1"><stop offset="0" stop-color="#8a8a8a"/><stop offset="0.600" stop-color="#3a3a3a"/><stop offset="1" stop-color="#1c1c1c"/></linearGradient>
    </defs>
    <!-- pages -->
    <path d="M777.500 147.500V138.500L780.500 135.500H790.500L793.500 138.500V147.500Z" fill="url(#dg1)" stroke="#333" stroke-width="1"/>
    <path d="M777.500 138.500H780.500V135.500M793.500 138.500H790.500V135.500" fill="none" stroke="#555" stroke-width="0.800"/>
    <path d="M785.500 133V150" stroke="#333" stroke-width="1"/>
    <!-- links -->
    <g fill="none" stroke="#333" stroke-width="1.500">
      <ellipse cx="780.800" cy="165.300" rx="4.200" ry="2.600" transform="rotate(38 780.800 165.300)" fill="#f6f6f6"/>
      <ellipse cx="791" cy="171.700" rx="4.300" ry="3" transform="rotate(-20 791 171.700)" fill="#f6f6f6"/>
      <ellipse cx="785.800" cy="169.600" rx="3" ry="1.600" transform="rotate(42 785.800 169.600)" stroke-width="1.300"/>
    </g>
    <!-- stroke -->
    <path d="M777 204.500H794" stroke="#444" stroke-width="1" stroke-dasharray="1.500 1"/>
    <rect x="777" y="207" width="17" height="1" fill="#6a6a6a"/>
    <rect x="777" y="210" width="17" height="2" fill="#4a4a4a"/>
    <rect x="777" y="214" width="17" height="3" fill="#333"/>
    <!-- color palette -->
    <path d="M777.300 240.500Q776.500 235.500 783 232.500Q790.500 229.800 794 232.300Q796 234.500 793.300 237.800Q790.500 239.300 791.300 240.800Q793.500 241.600 792.500 243.300Q788.500 246.800 782.500 246Q778 245 777.300 240.500Z" fill="url(#dg2)"/>
    <g fill="#f2f2f2"><ellipse cx="789" cy="233.700" rx="1.700" ry="1.300"/><ellipse cx="784.300" cy="235" rx="1.700" ry="1.300"/><ellipse cx="780.500" cy="238.300" rx="1.500" ry="1.400"/><ellipse cx="781.500" cy="242.600" rx="1.600" ry="1.300"/><ellipse cx="786.600" cy="243" rx="1.700" ry="1.300"/></g>
    <!-- swatches -->
    <rect x="777" y="273" width="17" height="13" fill="#303030"/>
    <g>
      <rect x="778" y="274" width="3" height="3" fill="#484848"/><rect x="782" y="274" width="3" height="3" fill="#8c8c8c"/><rect x="786" y="274" width="3" height="3" fill="#a0a0a0"/><rect x="790" y="274" width="3" height="3" fill="#eee"/>
      <rect x="778" y="278" width="3" height="3" fill="#6a6a6a"/><rect x="782" y="278" width="3" height="3" fill="#9c9c9c"/><rect x="786" y="278" width="3" height="3" fill="#666"/><rect x="790" y="278" width="3" height="3" fill="#fff"/>
      <rect x="778" y="282" width="3" height="3" fill="#8c8c8c"/><rect x="782" y="282" width="3" height="3" fill="#dcdcdc"/><rect x="786" y="282" width="3" height="3" fill="#fff"/><rect x="790" y="282" width="3" height="3" fill="#ccc"/>
    </g>
  </svg>
</div>
</body>
</html>
